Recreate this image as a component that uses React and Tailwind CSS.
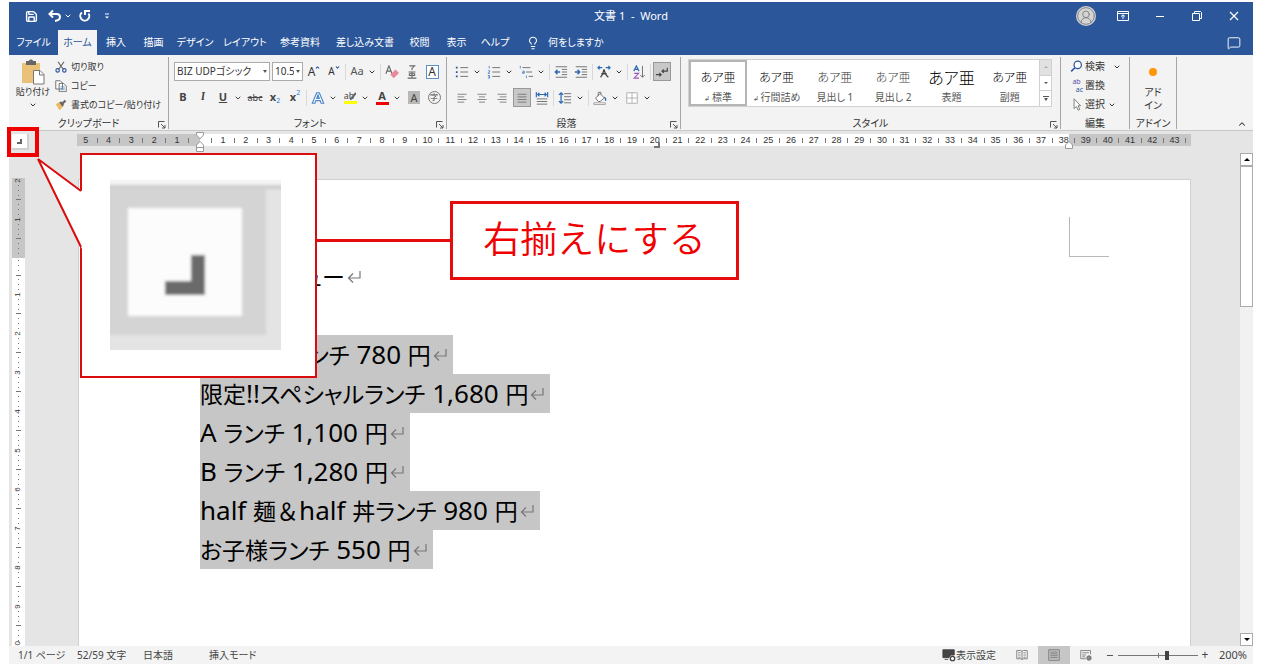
import React, { useState } from 'react';
import { ChevronDown, ChevronUp, Lightbulb, Save, MessageSquare, CircleUserRound } from 'lucide-react';

const leftTicks = [5, '', 4, '', 3, '', 2, '', 1, ''];
const mainTicks = Array.from({ length: 76 }, (_, i) => (i % 2 ? (i + 1) / 2 : ''));
const rightTicks = Array.from({ length: 11 }, (_, i) => (i % 2 ? 39 + (i - 1) / 2 : ''));

const tabs = [
  { name: 'ファイル', size: 'w-[49px]' },
  { name: 'ホーム', size: 'w-[39px]' },
  { name: '挿入', size: 'w-[38px]' },
  { name: '描画', size: 'w-[37px]' },
  { name: 'デザイン', size: 'w-[46px]' },
  { name: 'レイアウト', size: 'w-[54px]' },
  { name: '参考資料', size: 'w-[56px]' },
  { name: '差し込み文書', size: 'w-[74px]' },
  { name: '校閲', size: 'w-[35px]' },
  { name: '表示', size: 'w-[39px]' },
  { name: 'ヘルプ', size: 'w-[38px]' },
];

const styleList = [
  { name: '標準', mark: true, sample: 'text-[12px] text-black' },
  { name: '行間詰め', mark: true, sample: 'text-[12px] text-black' },
  { name: '見出し 1', sample: 'text-[12px] text-[#333]' },
  { name: '見出し 2', sample: 'text-[12px] text-[#444]' },
  { name: '表題', sample: 'text-[16px] text-black' },
  { name: '副題', sample: 'text-[12px] text-black' },
];

const menuLines = [
  '日替わりランチ 780 円',
  '限定!!スペシャルランチ 1,680 円',
  'A ランチ 1,100 円',
  'B ランチ 1,280 円',
  'half 麺＆half 丼ランチ 980 円',
  'お子様ランチ 550 円',
];

function Icon({ children, className = 'h-4 w-4' }) {
  return (
    <svg viewBox="0 0 16 16" fill="none" stroke="#666" className={className} aria-hidden="true">
      {children}
    </svg>
  );
}

function Tool({ label, active, children }) {
  return (
    <button
      aria-label={label}
      className={`flex h-[19px] w-[18px] shrink-0 items-center justify-center ${active ? 'border border-[#999] bg-[#c8c8c8]' : ''}`}
    >
      {children}
    </button>
  );
}

function SplitTool({ label, children }) {
  return (
    <div className="flex shrink-0 items-center">
      <Tool label={label}>{children}</Tool>
      <button aria-label={`${label}のオプション`} className="flex h-[19px] w-3 items-center justify-center">
        <ChevronDown className="h-2 w-2" strokeWidth={3} />
      </button>
    </div>
  );
}

function Sep() {
  return <span className="h-4 w-px shrink-0 bg-[#d8d8d8]" />;
}

function Launcher({ label }) {
  return (
    <button aria-label={label} className="absolute right-[2px] bottom-0">
      <svg viewBox="0 0 8 8" fill="none" stroke="#555" className="h-2 w-2">
        <path d="M0.5 6.5V0.5H6.5M3 3L7 7M7 4V7H4" />
      </svg>
    </button>
  );
}

function Group({ label, className, launcher, children }) {
  return (
    <section className={`flex flex-col border-r border-[#a6a6a6] ${className}`}>
      <div className="min-h-0 flex-1">{children}</div>
      <div className="relative flex h-[11px] items-center justify-center whitespace-nowrap text-[10px] leading-[11px]">
        {label}
        {launcher && <Launcher label={`${label}の設定`} />}
      </div>
    </section>
  );
}

function TitleBar() {
  return (
    <header className="grid h-7 grid-cols-[1fr_auto_1fr] items-center text-white">
      <div className="flex items-center pl-4">
        <button aria-label="上書き保存" className="w-[22px]"><Save className="h-[13px] w-[13px]" strokeWidth={2.6} /></button>
        <button aria-label="元に戻す" className="ml-px">
          <svg viewBox="0 0 14 14" fill="none" stroke="white" strokeWidth="2" className="h-[14px] w-[14px]">
            <path d="M5 1.5L1.5 5L5 8.500M2 5H8.500C11 5 12 6.500 12 8C12 10 10.500 11.500 7 12" />
          </svg>
        </button>
        <button aria-label="元に戻す一覧" className="ml-[2px]"><ChevronDown className="h-2 w-2" strokeWidth={3} /></button>
        <button aria-label="やり直し" className="ml-[6px]">
          <svg viewBox="0 0 14 14" fill="none" stroke="white" strokeWidth="2" className="h-[14px] w-[14px]">
            <path d="M4 3.500A4.500 4.500 0 1 0 10.500 4.500M7 6V2H12" />
          </svg>
        </button>
        <button aria-label="クイックアクセス" className="ml-3">
          <svg viewBox="0 0 6 8" fill="white" className="h-2 w-[6px]"><path d="M1 1.500H5V2.500H1ZM1 4.500H5L3 6.500Z" /></svg>
        </button>
      </div>
      <h1 className="whitespace-pre text-[11px]">文書 1  -  Word</h1>
      <div className="flex items-center justify-end">
        <button aria-label="アカウント" className="rounded-full bg-[#d4d4d4] text-[#777]">
          <CircleUserRound className="h-5 w-5" strokeWidth={1} />
        </button>
        <button aria-label="リボンの表示オプション" className="flex w-[54px] justify-center">
          <svg viewBox="0 0 12 10" fill="none" stroke="white" className="h-[10px] w-3"><path d="M.5.5H11.500V9.500H.5ZM.5 2.500H11.500M6 8V4M4 5.500L6 3.800L8 5.500" /></svg>
        </button>
        <button aria-label="最小化" className="flex w-5 justify-center"><span className="h-px w-2 bg-white" /></button>
        <button aria-label="元のサイズに戻す" className="flex w-[54px] justify-center">
          <svg viewBox="0 0 10 10" fill="none" stroke="white" className="h-[10px] w-[10px]"><path d="M.5 2.500H7.500V9.500H.5ZM2.500 2V.5H8.500L9.500 1.500V7.500H8" /></svg>
        </button>
        <button aria-label="閉じる" className="mr-[9px] flex w-5 justify-center">
          <svg viewBox="0 0 10 10" stroke="white" strokeWidth="1.200" className="h-[10px] w-[10px]"><path d="M1 1L9 9M9 1L1 9" /></svg>
        </button>
      </div>
    </header>
  );
}

function TabBar() {
  return (
    <nav className="flex h-[25px] items-stretch text-[10px] text-white">
      {tabs.map(({ name, size }) => (
        <button
          key={name}
          className={`shrink-0 whitespace-nowrap ${size} ${name === 'ホーム' ? 'bg-[#f3f3f3] text-[#2b579a]' : ''}`}
        >
          {name}
        </button>
      ))}
      <button className="ml-3 flex items-center gap-2 whitespace-nowrap">
        <Lightbulb className="h-[14px] w-[14px]" strokeWidth={1.8} />
        何をしますか
      </button>
      <button aria-label="コメント" className="mr-3 ml-auto">
        <MessageSquare className="h-[14px] w-[14px]" strokeWidth={1.6} />
      </button>
    </nav>
  );
}

function ClipboardGroup() {
  return (
    <Group label="クリップボード" launcher className="w-[160px]">
      <div className="flex text-[9px]">
        <button className="flex w-[46px] shrink-0 flex-col items-center whitespace-nowrap pt-px pl-[2px] leading-[14px]">
          <svg viewBox="0 0 24 27" className="h-[27px] w-6" aria-hidden="true">
            <rect x="1" y="5" width="18" height="20" fill="#e9c178" />
            <path d="M5 7V3H8C8 1 12 1 12 3H15V7Z" fill="#666" />
            <path d="M12.500 12.500H19L23 16.500V26H12.500Z" fill="white" stroke="#777" />
            <path d="M18.500 12.500V17H23" fill="none" stroke="#777" />
          </svg>
          貼り付け
          <ChevronDown className="mt-[2px] h-2 w-2" strokeWidth={3} />
        </button>
        <div className="flex flex-col items-start">
          <button className="flex h-[19px] items-center gap-1 whitespace-nowrap">
            <Icon className="h-3 w-3">
              <path d="M4 1L11 11M12 1L5 11" strokeWidth="1.600" />
              <circle cx="3.500" cy="12.500" r="2.300" stroke="#2b579a" strokeWidth="1.500" />
              <circle cx="12.500" cy="12.500" r="2.300" stroke="#2b579a" strokeWidth="1.500" />
            </Icon>
            切り取り
          </button>
          <button className="flex h-[19px] items-center gap-1 whitespace-nowrap">
            <Icon className="h-3 w-3">
              <path d="M1 1H7L10 4V12H1ZM5.500 4.500H11.500L15 8V15.500H5.500Z" fill="white" strokeWidth="1.200" />
              <path d="M7.500 9H13M7.500 11H13M7.500 13H13" stroke="#5b8fc7" />
            </Icon>
            コピー
          </button>
          <button className="flex h-[19px] items-center gap-1 whitespace-nowrap">
            <Icon className="h-3 w-3">
              <path d="M1 7L6 4L11 10L6 15Z" fill="#efb964" stroke="none" />
              <path d="M7 4L11 9M10 6L14 2" strokeWidth="3" stroke="#666" />
            </Icon>
            書式のコピー/貼り付け
          </button>
        </div>
      </div>
    </Group>
  );
}

function FontGroup() {
  return (
    <Group label="フォント" launcher className="w-[278px] pl-[5px]">
      <div className="flex flex-col gap-[7px] pt-[5px]">
        <div className="flex items-center gap-[2px]">
          <div className="relative">
            <select aria-label="フォント名" className="block h-[19px] w-24 appearance-none border border-[#ababab] bg-white pl-[2px] text-[10px] outline-none">
              <option>BIZ UDPゴシック</option>
            </select>
            <span className="pointer-events-none absolute top-2 right-[3px] border-x-2 border-t-3 border-x-transparent border-t-[#555]" />
          </div>
          <div className="relative">
            <select aria-label="フォント サイズ" className="block h-[19px] w-[31px] appearance-none border border-[#ababab] bg-white pr-2 pl-[2px] text-[10px] outline-none">
              <option>10.5</option>
            </select>
            <span className="pointer-events-none absolute top-2 right-[3px] border-x-2 border-t-3 border-x-transparent border-t-[#555]" />
          </div>
          <Tool label="フォント サイズの拡大">
            <span className="text-[12px]">A</span><ChevronUp className="mb-2 h-[5px] w-[5px] text-[#2b579a]" strokeWidth={5} />
          </Tool>
          <Tool label="フォント サイズの縮小">
            <span className="text-[10px]">A</span><ChevronDown className="mb-2 h-[5px] w-[5px] text-[#2b579a]" strokeWidth={5} />
          </Tool>
          <Sep />
          <SplitTool label="文字種の変換"><span className="text-[11px] text-[#555]">Aa</span></SplitTool>
          <Sep />
          <Tool label="書式のクリア">
            <Icon className="h-[14px] w-[14px]">
              <path d="M1 10L4.500 1L8 10M2.500 7H6.500" strokeWidth="1.300" />
              <path d="M6 11L12 5L16 9L10 15Z" fill="#e88a9a" stroke="none" />
            </Icon>
          </Tool>
          <Tool label="ルビ">
            <Icon className="h-[14px] w-[14px]">
              <path d="M5 1H11L8 4M8 3V6M4 8H12M5 10H11V12H5ZM8 8V15M3 15H13" strokeWidth="1.200" />
            </Icon>
          </Tool>
          <Tool label="囲み線"><span className="h-[14px] w-[13px] border border-[#5b8fc7] bg-white text-[12px] leading-[12px]">A</span></Tool>
        </div>
        <div className="flex items-center gap-[2px] text-[11px] text-[#444]">
          <Tool label="太字"><b>B</b></Tool>
          <Tool label="斜体"><i className="font-serif font-bold">I</i></Tool>
          <SplitTool label="下線"><b className="underline">U</b></SplitTool>
          <Tool label="取り消し線"><span className="text-[9px] line-through">abc</span></Tool>
          <Tool label="下付き"><b>x</b><span className="mt-2 text-[7px] text-[#2b7cd3]">2</span></Tool>
          <Tool label="上付き"><b>x</b><span className="mb-2 text-[7px] text-[#2b7cd3]">2</span></Tool>
          <Sep />
          <SplitTool label="文字の効果">
            <Icon className="h-[14px] w-[14px]">
              <path d="M1.500 14L6.500 2H9.500L14.500 14H11.500L10.500 11H5.500L4.500 14ZM6.500 8.500H9.500L8 4.500Z" fill="white" stroke="#4a86c8" strokeWidth="1.300" />
            </Icon>
          </SplitTool>
          <SplitTool label="蛍光ペン">
            <span className="flex flex-col items-center">
              <span className="flex h-[9px] items-center text-[9px] leading-[9px]">
                ab
                <svg viewBox="0 0 6 8" className="-ml-1 h-2 w-[6px]"><path d="M0 8L6 1" stroke="#666" strokeWidth="2" /></svg>
              </span>
              <span className="mt-px h-[3px] w-[13px] bg-[#ffff00]" />
            </span>
          </SplitTool>
          <SplitTool label="フォントの色">
            <span className="flex flex-col items-center">
              <b className="h-[10px] leading-[10px]">A</b>
              <span className="mt-px h-[3px] w-[13px] bg-[#f00000]" />
            </span>
          </SplitTool>
          <Tool label="文字の網かけ"><span className="h-[13px] w-3 bg-[#b8b8b8] leading-[13px]">A</span></Tool>
          <Tool label="囲い文字"><span className="h-[13px] w-[13px] rounded-full border border-[#777] text-[8px] leading-[10px]">字</span></Tool>
        </div>
      </div>
    </Group>
  );
}

function ParagraphGroup() {
  return (
    <Group label="段落" launcher className="w-[234px] pl-[6px]">
      <div className="flex flex-col gap-[7px] pt-[5px]">
        <div className="flex items-center gap-[2px]">
          <SplitTool label="箇条書き">
            <Icon className="h-[14px] w-[14px]">
              <path d="M6 3H15M6 8H15M6 13H15" />
              <path d="M1 3H3M1 8H3M1 13H3" stroke="#2b579a" strokeWidth="2" />
            </Icon>
          </SplitTool>
          <SplitTool label="段落番号">
            <Icon className="h-[14px] w-[14px]">
              <path d="M6 3H15M6 8H15M6 13H15" />
              <path d="M2.500 1V4M1 6.500H3V8L1 9.500H3.500M1 12H3V15H1M1.500 13.500H3" stroke="#4a86c8" />
            </Icon>
          </SplitTool>
          <SplitTool label="アウトライン">
            <Icon className="h-[14px] w-[14px]">
              <path d="M4 3H13M8 8H15M11 13H16" />
              <path d="M1.500 1V4M4 7H6V9.500H4V8.300H6M8.500 12V15" stroke="#4a86c8" />
            </Icon>
          </SplitTool>
          <Sep />
          <Tool label="インデントを減らす">
            <Icon className="h-[14px] w-[14px]">
              <path d="M2 2H15M9 5H15M9 8H15M9 11H15M2 14H15" />
              <path d="M7 8H2M4 5.500L1.500 8L4 10.500" stroke="#2b68b0" strokeWidth="1.600" />
            </Icon>
          </Tool>
          <Tool label="インデントを増やす">
            <Icon className="h-[14px] w-[14px]">
              <path d="M2 2H15M9 5H15M9 8H15M9 11H15M2 14H15" />
              <path d="M1 8H6M4 5.500L6.500 8L4 10.500" stroke="#2b68b0" strokeWidth="1.600" />
            </Icon>
          </Tool>
          <Sep />
          <SplitTool label="拡張書式">
            <Icon className="h-[14px] w-[14px]">
              <path d="M4 14C6 12 7 9 8 5C9 9 10 12 13 14M5 10H11" stroke="#444" strokeWidth="1.500" />
              <path d="M1 3H6M3 1L1 3L3 5M10 3H15M13 1L15 3L13 5" stroke="#2b68b0" strokeWidth="1.300" />
            </Icon>
          </SplitTool>
          <Sep />
          <Tool label="並べ替え">
            <Icon className="h-[14px] w-[14px]">
              <path d="M2 7L5 1L8 7M3 5H7" stroke="#2b68b0" strokeWidth="1.300" />
              <path d="M2.500 9.500H7.500L2.500 15H8" stroke="#9b59b6" strokeWidth="1.300" />
              <path d="M12 1V14M9.500 11.500L12 14L14.500 11.500" />
            </Icon>
          </Tool>
          <Sep />
          <Tool label="編集記号の表示" active>
            <Icon className="h-[14px] w-[14px]">
              <path d="M14 3V7H8M10 5L8 7L10 9M1 11H7M5 9L7 11L5 13" stroke="#444" strokeWidth="1.300" />
            </Icon>
          </Tool>
        </div>
        <div className="flex items-center gap-[2px]">
          <Tool label="左揃え"><Icon className="h-3 w-3"><path d="M2 3H14M2 6.500H11M2 10H14M2 13.500H11" /></Icon></Tool>
          <Tool label="中央揃え"><Icon className="h-3 w-3"><path d="M2 3H14M4 6.500H12M2 10H14M4 13.500H12" /></Icon></Tool>
          <Tool label="右揃え"><Icon className="h-3 w-3"><path d="M2 3H14M5 6.500H14M2 10H14M5 13.500H14" /></Icon></Tool>
          <Tool label="両端揃え" active><Icon className="h-3 w-3"><path d="M2 3H14M2 6.500H14M2 10H14M2 13.500H14" /></Icon></Tool>
          <Tool label="均等割り付け">
            <Icon className="h-[14px] w-[14px]">
              <path d="M2 9H14M2 12H14M2 15H14" />
              <path d="M1.500 1V7M14.500 1V7M3 4H13M5 2L3 4L5 6M11 2L13 4L11 6" stroke="#2b68b0" strokeWidth="1.300" />
            </Icon>
          </Tool>
          <Sep />
          <SplitTool label="行間">
            <Icon className="h-[14px] w-[14px]">
              <path d="M7 3H15M7 6.500H15M7 10H15M7 13.500H15" />
              <path d="M3.500 2V14M1 4.500L3.500 2L6 4.500M1 11.500L3.500 14L6 11.500" stroke="#2b68b0" strokeWidth="1.400" />
            </Icon>
          </SplitTool>
          <Sep />
          <SplitTool label="塗りつぶし">
            <Icon className="h-[14px] w-[14px]">
              <path d="M3 8L8 3L13 8L8 12H6ZM6 6V1.500H9V4" fill="white" />
              <path d="M13 7Q15.500 10 14 11" stroke="#2b68b0" strokeWidth="1.500" />
              <path d="M1 13.500H14V15.500H1Z" fill="white" stroke="#999" />
            </Icon>
          </SplitTool>
          <SplitTool label="罫線">
            <Icon className="h-[14px] w-[14px]"><path d="M2 2H14V14H2ZM8 2V14M2 8H14" fill="white" stroke="#aaa" /></Icon>
          </SplitTool>
        </div>
      </div>
    </Group>
  );
}

function StyleGroup() {
  return (
    <Group label="スタイル" launcher className="w-[380px]">
      <div className="flex pt-[2px] pr-2 pl-[7px]">
        <div className="flex h-12 flex-1 border border-[#d0d0d0] bg-white">
          {styleList.map(({ name, mark, sample }, i) => (
            <button
              key={name}
              className={`flex flex-1 flex-col items-center justify-end whitespace-nowrap ${i === 0 ? 'border-2 border-[#b5b5b5]' : 'border-2 border-transparent'}`}
            >
              <span className={`flex h-6 items-center font-light ${sample}`}>あア亜</span>
              <span className="h-[14px] text-[10px] leading-[14px] text-[#555]">
                {mark && <span className="text-[7px]">↲ </span>}
                {name}
              </span>
            </button>
          ))}
        </div>
        <div className="flex w-3 flex-col border border-l-0 border-[#d0d0d0] bg-white">
          <button aria-label="前の行" className="flex flex-1 items-center justify-center bg-[#e1e1e1]"><span className="border-x-2 border-b-2 border-x-transparent border-b-[#aaa]" /></button>
          <button aria-label="次の行" className="flex flex-1 items-center justify-center border-y border-[#d0d0d0]"><span className="border-x-2 border-t-2 border-x-transparent border-t-[#555]" /></button>
          <button aria-label="その他" className="flex flex-1 flex-col items-center justify-center gap-px"><span className="h-px w-[6px] bg-[#555]" /><span className="border-x-2 border-t-3 border-x-transparent border-t-[#555]" /></button>
        </div>
      </div>
    </Group>
  );
}

function EditGroup() {
  return (
    <Group label="編集" className="w-[69px]">
      <div className="flex flex-col items-start pl-[9px] text-[10px]">
        <button className="flex h-[19px] items-center gap-[2px] whitespace-nowrap">
          <Icon className="h-[13px] w-[13px]"><circle cx="9.500" cy="6" r="4.500" fill="white" stroke="#2b579a" strokeWidth="1.500" /><path d="M6 9.500L1.500 14" stroke="#2b579a" strokeWidth="2" /></Icon>
          検索
          <ChevronDown className="ml-[6px] h-2 w-2" strokeWidth={3} />
        </button>
        <button className="flex h-[19px] items-center gap-[2px] whitespace-nowrap">
          <span className="flex w-[13px] flex-col text-[7px] leading-[8px]">
            <span className="text-[#5a4ea8]">ab</span>
            <span className="text-right text-[#2b579a]">ac</span>
          </span>
          置換
        </button>
        <button className="flex h-[19px] items-center gap-[2px] whitespace-nowrap">
          <Icon className="h-[13px] w-[13px]"><path d="M5 1V13L8 10.500L10 15L12 14L10 9.500H13Z" fill="white" /></Icon>
          選択
          <ChevronDown className="ml-px h-2 w-2" strokeWidth={3} />
        </button>
      </div>
    </Group>
  );
}

function HorizontalRuler() {
  const tick = (t, i) => (
    <span key={i} className="flex w-0 flex-1 items-center justify-center">
      {t === '' ? <span className="h-[5px] w-px bg-[#777]" /> : t}
    </span>
  );

  return (
    <div className="flex h-[22px] pt-[3px] pr-[62px] pl-[3px]">
      <button aria-label="タブ セレクター" className="mr-[48px] flex h-4 w-[17px] shrink-0 items-center justify-center border-r-2 border-b-2 border-[#d0d0d0] bg-white">
        <span className="h-[5px] w-[5px] border-r-2 border-b-2 border-[#666]" />
      </button>
      <div className="flex h-3 flex-1 font-['Liberation_Sans',sans-serif] text-[9px] leading-3 text-[#333]">
        <div className="w-0 grow-123 bg-[#c6c6c6]">
          <div className="flex h-3 pr-[6px] pl-[3px]">{leftTicks.map(tick)}</div>
        </div>
        <div className="relative w-0 grow-869 bg-white">
          <div className="flex h-3 pl-[6px]">{mainTicks.map(tick)}</div>
          <svg viewBox="0 0 8 20" fill="white" stroke="#999" className="absolute -top-[2px] -left-1 h-5 w-2">
            <path d="M.5.5H7.500V3L4 7L.5 3ZM4 9.500L7.500 13V19.500H.5V13ZM.5 15.500H7.500" />
          </svg>
          <span className="absolute top-2 left-[454px] h-[6px] w-[6px] border-r-2 border-b-2 border-[#777]" />
          <svg viewBox="0 0 8 8" fill="white" stroke="#999" className="absolute top-[7px] -right-1 h-2 w-2">
            <path d="M4 .5L7.500 4V7.500H.5V4Z" />
          </svg>
        </div>
        <div className="flex w-0 grow-122 bg-[#c6c6c6]">{rightTicks.map(tick)}</div>
      </div>
    </div>
  );
}

function RulerUnit({ number }) {
  return (
    <div className={`flex flex-col items-center ${number ? 'h-[39px]' : 'h-[34px]'}`}>
      {number && <span className="flex h-0 flex-1 -rotate-90 items-center text-[8px] leading-none">{number}</span>}
      {[0, 1, 2, 3, 4, 5, 6].map((i) => (
        <span key={i} className="flex h-0 flex-1 items-center">
          <span className={i === 3 ? 'h-px w-[5px] bg-[#777]' : 'h-px w-px bg-[#777]'} />
        </span>
      ))}
    </div>
  );
}

function VerticalRuler() {
  return (
    <div className="mr-[53px] ml-[3px] flex h-[493px] w-[13px] shrink-0 flex-col overflow-hidden pt-[25px] font-['Liberation_Sans',sans-serif] text-[#333]">
      <div className="h-20 shrink-0 bg-[#c6c6c6]">
        <RulerUnit number={2} />
        <RulerUnit number={1} />
      </div>
      <div className="flex-1 bg-white">
        <RulerUnit />
        {[1, 2, 3, 4, 5, 6, 7, 8, 9, 10].map((n) => <RulerUnit key={n} number={n} />)}
      </div>
    </div>
  );
}

// western characters are set larger than the kana and kanji around them
function DocLine({ text, selected }) {
  const runs = text.split(/([A-Za-z0-9!, ]+|＆)/).filter(Boolean);
  const runStyle = (run) => {
    if (run === '＆') return '[font-feature-settings:normal]';
    return /^[A-Za-z0-9!, ]/.test(run) ? 'text-[26px] leading-[30px]' : '';
  };

  return (
    <p className="flex h-[39px]">
      <span className={`flex items-center whitespace-pre ${selected ? 'bg-[#c6c6c6]' : ''}`}>
        <span className="pt-px leading-[38px]">
          {runs.map((run, i) => <span key={i} className={runStyle(run)}>{run}</span>)}
        </span>
        <svg viewBox="0 0 14 14" fill="none" stroke="#777" strokeWidth="1.200" className="mr-[6px] ml-[2px] h-[14px] w-[14px]">
          <path d="M13 1V8H1.500M6 3.500L1.500 8L6 12.500" />
        </svg>
      </span>
    </p>
  );
}

function ScrollBar() {
  return (
    <div className="ml-auto flex w-[13px] shrink-0 flex-col bg-[#f1f1f1]">
      <button aria-label="上へスクロール" className="flex h-[13px] items-center justify-center border border-[#ababab] bg-white">
        <span className="border-x-3 border-b-3 border-x-transparent border-b-black" />
      </button>
      <div className="h-[141px] border border-[#ababab] bg-white" />
      <button aria-label="下へスクロール" className="mt-auto flex h-[13px] items-center justify-center border border-[#ababab] bg-white">
        <span className="border-x-3 border-t-3 border-x-transparent border-t-black" />
      </button>
    </div>
  );
}

function StatusBar() {
  const [zoom, setZoom] = useState(62);

  return (
    <footer className="flex h-[18px] items-center bg-[#f3f3f3] pr-[6px] pl-[9px] text-[10px] whitespace-nowrap text-[#444]">
      <span className="w-[59px]">1/1 ページ</span>
      <span className="w-[66px]">52/59 文字</span>
      <span className="w-[66px]">日本語</span>
      <span>挿入モード</span>
      <button className="ml-auto flex items-center">
        <Icon className="h-[14px] w-[14px]">
          <path d="M1 2H14V8H10L8 11H1ZM3 13H7" fill="#444" stroke="#444" />
          <circle cx="12" cy="12" r="2.500" fill="white" stroke="#444" strokeWidth="1.500" />
        </Icon>
        表示設定
      </button>
      <button aria-label="閲覧モード" className="ml-[10px] flex w-8 justify-center">
        <Icon className="h-3 w-3"><path d="M8 3V14M1 2H6L8 3L10 2H15V13H10L8 14L6 13H1ZM3 5H6M3 8H6M3 11H6M10 5H13M10 8H13M10 11H13" /></Icon>
      </button>
      <button aria-label="印刷レイアウト" className="flex h-[18px] w-8 items-center justify-center bg-[#c6c6c6]">
        <Icon className="h-3 w-3"><path d="M1 1H15V15H1ZM3 4H13M3 6.500H13M3 9H13M3 11.500H13" /></Icon>
      </button>
      <button aria-label="Web レイアウト" className="flex w-8 justify-center">
        <Icon className="h-3 w-3"><path d="M8 13H1V2H14V7M3 5H12M3 8H8M3 10.500H7" /><circle cx="12" cy="12" r="3" fill="#888" /></Icon>
      </button>
      <button aria-label="縮小" className="mr-[3px] ml-[2px] flex w-[11px] justify-center"><span className="h-px w-[6px] bg-[#555]" /></button>
      <input
        type="range"
        aria-label="ズーム"
        value={zoom}
        onChange={(e) => setZoom(e.target.value)}
        className="h-3 w-20 appearance-none bg-[linear-gradient(#777,#777),linear-gradient(#777,#777)] bg-[length:100%_1px,1px_5px] bg-center bg-no-repeat [&::-webkit-slider-thumb]:h-[9px] [&::-webkit-slider-thumb]:w-1 [&::-webkit-slider-thumb]:appearance-none [&::-webkit-slider-thumb]:bg-[#444]"
      />
      <button aria-label="拡大" className="w-[14px] text-[12px]">+</button>
      <span className="w-[35px] text-right text-[11px]">200%</span>
    </footer>
  );
}

function Callout() {
  return (
    <>
      <div className="absolute top-[127px] left-[7px] h-[30px] w-8 border-4 border-[#f00000]" />
      <div className="absolute top-[153px] left-[80px] h-[225px] w-[237px] border-2 border-[#d90d0d] bg-white p-7 pt-[25px]">
        <svg viewBox="0 0 171 170" className="h-[170px] w-[171px]">
          <defs>
            <filter id="soft"><feGaussianBlur stdDeviation="1.5" /></filter>
            <clipPath id="frame"><rect width="171" height="170" /></clipPath>
          </defs>
          <rect width="171" height="170" fill="#e4e4e4" />
          <g filter="url(#soft)" clipPath="url(#frame)">
            <rect x="-5" y="-5" width="182" height="10" fill="#f4f4f4" />
            <rect x="-5" y="5" width="182" height="4" fill="#cdcdcd" />
            <rect x="-5" y="8" width="161" height="147" fill="#d4d4d4" />
            <rect x="18" y="28" width="114" height="108" fill="#fcfcfc" />
            <path d="M81 75H95V115H55V101H81Z" fill="#6b6b6b" />
          </g>
        </svg>
      </div>
      <svg viewBox="0 0 46 92" className="absolute top-[157px] left-[37px] h-[92px] w-[46px]">
        <path d="M45 34L1 2L45 92Z" fill="white" />
        <path d="M44 34L1 2L44 90" fill="none" stroke="#d90d0d" strokeWidth="2" />
      </svg>
      <div className="absolute top-[239px] left-[317px] h-[3px] w-[133px] bg-[#e60c0c]" />
      <div className="absolute top-[201px] left-[450px] flex h-[79px] w-[289px] items-center justify-center border-3 border-[#e60c0c] bg-white pb-1 text-[37px] leading-none font-[350] whitespace-nowrap text-[#f00000] [font-feature-settings:normal]">
        右揃えにする
      </div>
    </>
  );
}

function App() {
  return (
    <div
      lang="ja"
      className="relative flex min-h-screen flex-col bg-white pt-[2px] pr-2 pb-[5px] pl-[9px] font-['Noto_Sans','Noto_Sans_CJK_JP',sans-serif] text-[#333] [font-feature-settings:'palt']"
    >
      <div className="bg-[#2b579a]">
        <TitleBar />
        <TabBar />
      </div>

      <div className="flex h-[76px] border-b border-[#c8c8c8] bg-[#f3f3f3] pt-[2px] pb-px">
        <ClipboardGroup />
        <FontGroup />
        <ParagraphGroup />
        <StyleGroup />
        <EditGroup />
        <Group label="アドイン" className="w-[47px]">
          <button className="flex w-full flex-col items-center pt-[11px] text-[10px] leading-[13px]">
            <span className="mb-[10px] h-2 w-2 rounded-full bg-[#ff9500]" />
            アド
            <br />
            イン
          </button>
        </Group>
        <button aria-label="リボンを折りたたむ" className="mt-auto mr-[6px] ml-auto">
          <ChevronUp className="h-[10px] w-[10px]" strokeWidth={2.5} />
        </button>
      </div>

      <main className="flex flex-1 flex-col bg-[#e5e5e5]">
        <HorizontalRuler />
        <div className="flex flex-1">
          <VerticalRuler />
          <article className="relative mt-[26px] flex-1 border border-b-0 border-[#d0d0d0] bg-white pt-[77px] pl-[121px] text-[23px] text-black">
            <DocLine text="ランチメニュー" />
            <p className="h-[39px]" />
            {menuLines.map((line) => <DocLine key={line} text={line} selected />)}
            <span className="absolute top-[37px] right-[81px] h-10 w-10 border-b border-l border-[#b8b8b8]" />
          </article>
          <div className="flex w-[62px] shrink-0"><ScrollBar /></div>
        </div>
      </main>

      <StatusBar />
      <Callout />
    </div>
  );
}

export default App;
